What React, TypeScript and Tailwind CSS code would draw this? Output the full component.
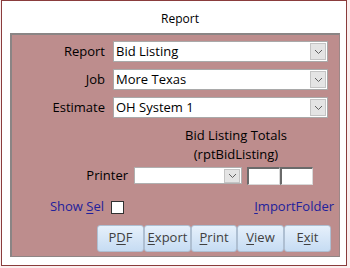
import React from "react";

const Chevron = () => (
  <svg width="9" height="6" viewBox="0 0 9 6" fill="none" stroke="#606060" strokeWidth="1">
    <path d="M1 1 L4.5 4.5 L8 1" />
  </svg>
);

const Combo = ({ value, w }: { value: string; w: string }) => (
  <div
    className={`${w} h-[21px] bg-white border border-[#a9a9a9] flex items-center justify-between pl-[2px] pr-[1px]`}
  >
    <span className="leading-none text-black">{value}</span>
    <div className="w-[16px] h-[17px] bg-[#e4e4e4] border border-[#c4c4c4] flex items-center justify-center">
      <Chevron />
    </div>
  </div>
);

const Btn = ({ children, w }: { children: React.ReactNode; w: string }) => (
  <button
    className={`${w} h-[27px] rounded-[3px] border border-[#aebfd2] bg-gradient-to-b from-[#e6f0fb] to-[#c6dcf3] text-[#404040] text-[13px] flex items-center justify-center`}
  >
    {children}
  </button>
);

export default function App() {
  return (
    <div className="w-[350px] h-[268px] bg-[#fbeeee] font-['Open_Sans',sans-serif] text-[13px]">
      <div className="ml-px w-[346px] h-[266px] border border-[#8a3c3c] bg-white flex flex-col">
        {/* title */}
        <div className="h-[32px] flex items-center justify-center pl-[12px] pt-[3px] text-[12px] text-black">
          Report
        </div>

        {/* pink panel */}
        <div className="ml-[8px] w-[330px] h-[224px] bg-[#bd8d8d] border-l-2 border-t-2 border-r border-b border-l-[#8a8585] border-t-[#8a8585] border-r-[#9c8888] border-b-[#8f8585] flex flex-col">
          <div className="mt-[6px] flex flex-col gap-[7px]">
            {[
              ["Report", "Bid Listing"],
              ["Job", "More Texas"],
              ["Estimate", "OH System 1"],
            ].map(([label, value]) => (
              <div key={label} className="flex items-center">
                <div className="w-[93px] text-right text-black">{label}</div>
                <div className="ml-[8px]">
                  <Combo value={value} w="w-[215px]" />
                </div>
              </div>
            ))}
          </div>

          <div className="mt-[8px] ml-[162px] w-[124px] text-center leading-[19px] text-black">
            <div>Bid Listing Totals</div>
            <div>(rptBidListing)</div>
          </div>

          <div className="mt-[2px] flex items-center">
            <div className="w-[116px] text-right text-black">Printer</div>
            <div className="ml-[6px]">
              <div className="w-[108px] h-[17px] bg-white border border-[#b0b0b0] flex items-center justify-end pr-[1px]">
                <div className="w-[16px] h-[14px] bg-[#e4e4e4] border border-[#c4c4c4] flex items-center justify-center">
                  <Chevron />
                </div>
              </div>
            </div>
            <div className="ml-[5px] w-[33px] h-[18px] bg-white border-l-2 border-t-2 border-r border-b border-l-[#6a6a6a] border-t-[#6a6a6a] border-r-[#d8d8d8] border-b-[#d8d8d8]" />
            <div className="w-[33px] h-[18px] bg-white border-l-2 border-t-2 border-r border-b border-l-[#6a6a6a] border-t-[#6a6a6a] border-r-[#d8d8d8] border-b-[#d8d8d8]" />
          </div>

          <div className="mt-[15px] flex items-center h-[13px]">
            <div className="w-[92px] text-right text-[#21219c]">
              Show <u className="underline-offset-2">S</u>el
            </div>
            <div className="ml-[7px] w-[13px] h-[13px] bg-white border border-[#303030]" />
            <div className="ml-auto mr-[5px] text-[#21219c]">
              <u className="underline-offset-2">I</u>mportFolder
            </div>
          </div>

          <div className="mt-[11px] ml-[85px] flex">
            <Btn w="w-[47px]">
              P<u className="underline-offset-2">D</u>F
            </Btn>
            <Btn w="w-[47px]">
              <u className="underline-offset-2">E</u>xport
            </Btn>
            <Btn w="w-[46px]">
              <u className="underline-offset-2">P</u>rint
            </Btn>
            <Btn w="w-[47px]">
              <u className="underline-offset-2">V</u>iew
            </Btn>
            <Btn w="w-[47px]">
              E<u className="underline-offset-2">x</u>it
            </Btn>
          </div>
        </div>
      </div>
    </div>
  );
}
